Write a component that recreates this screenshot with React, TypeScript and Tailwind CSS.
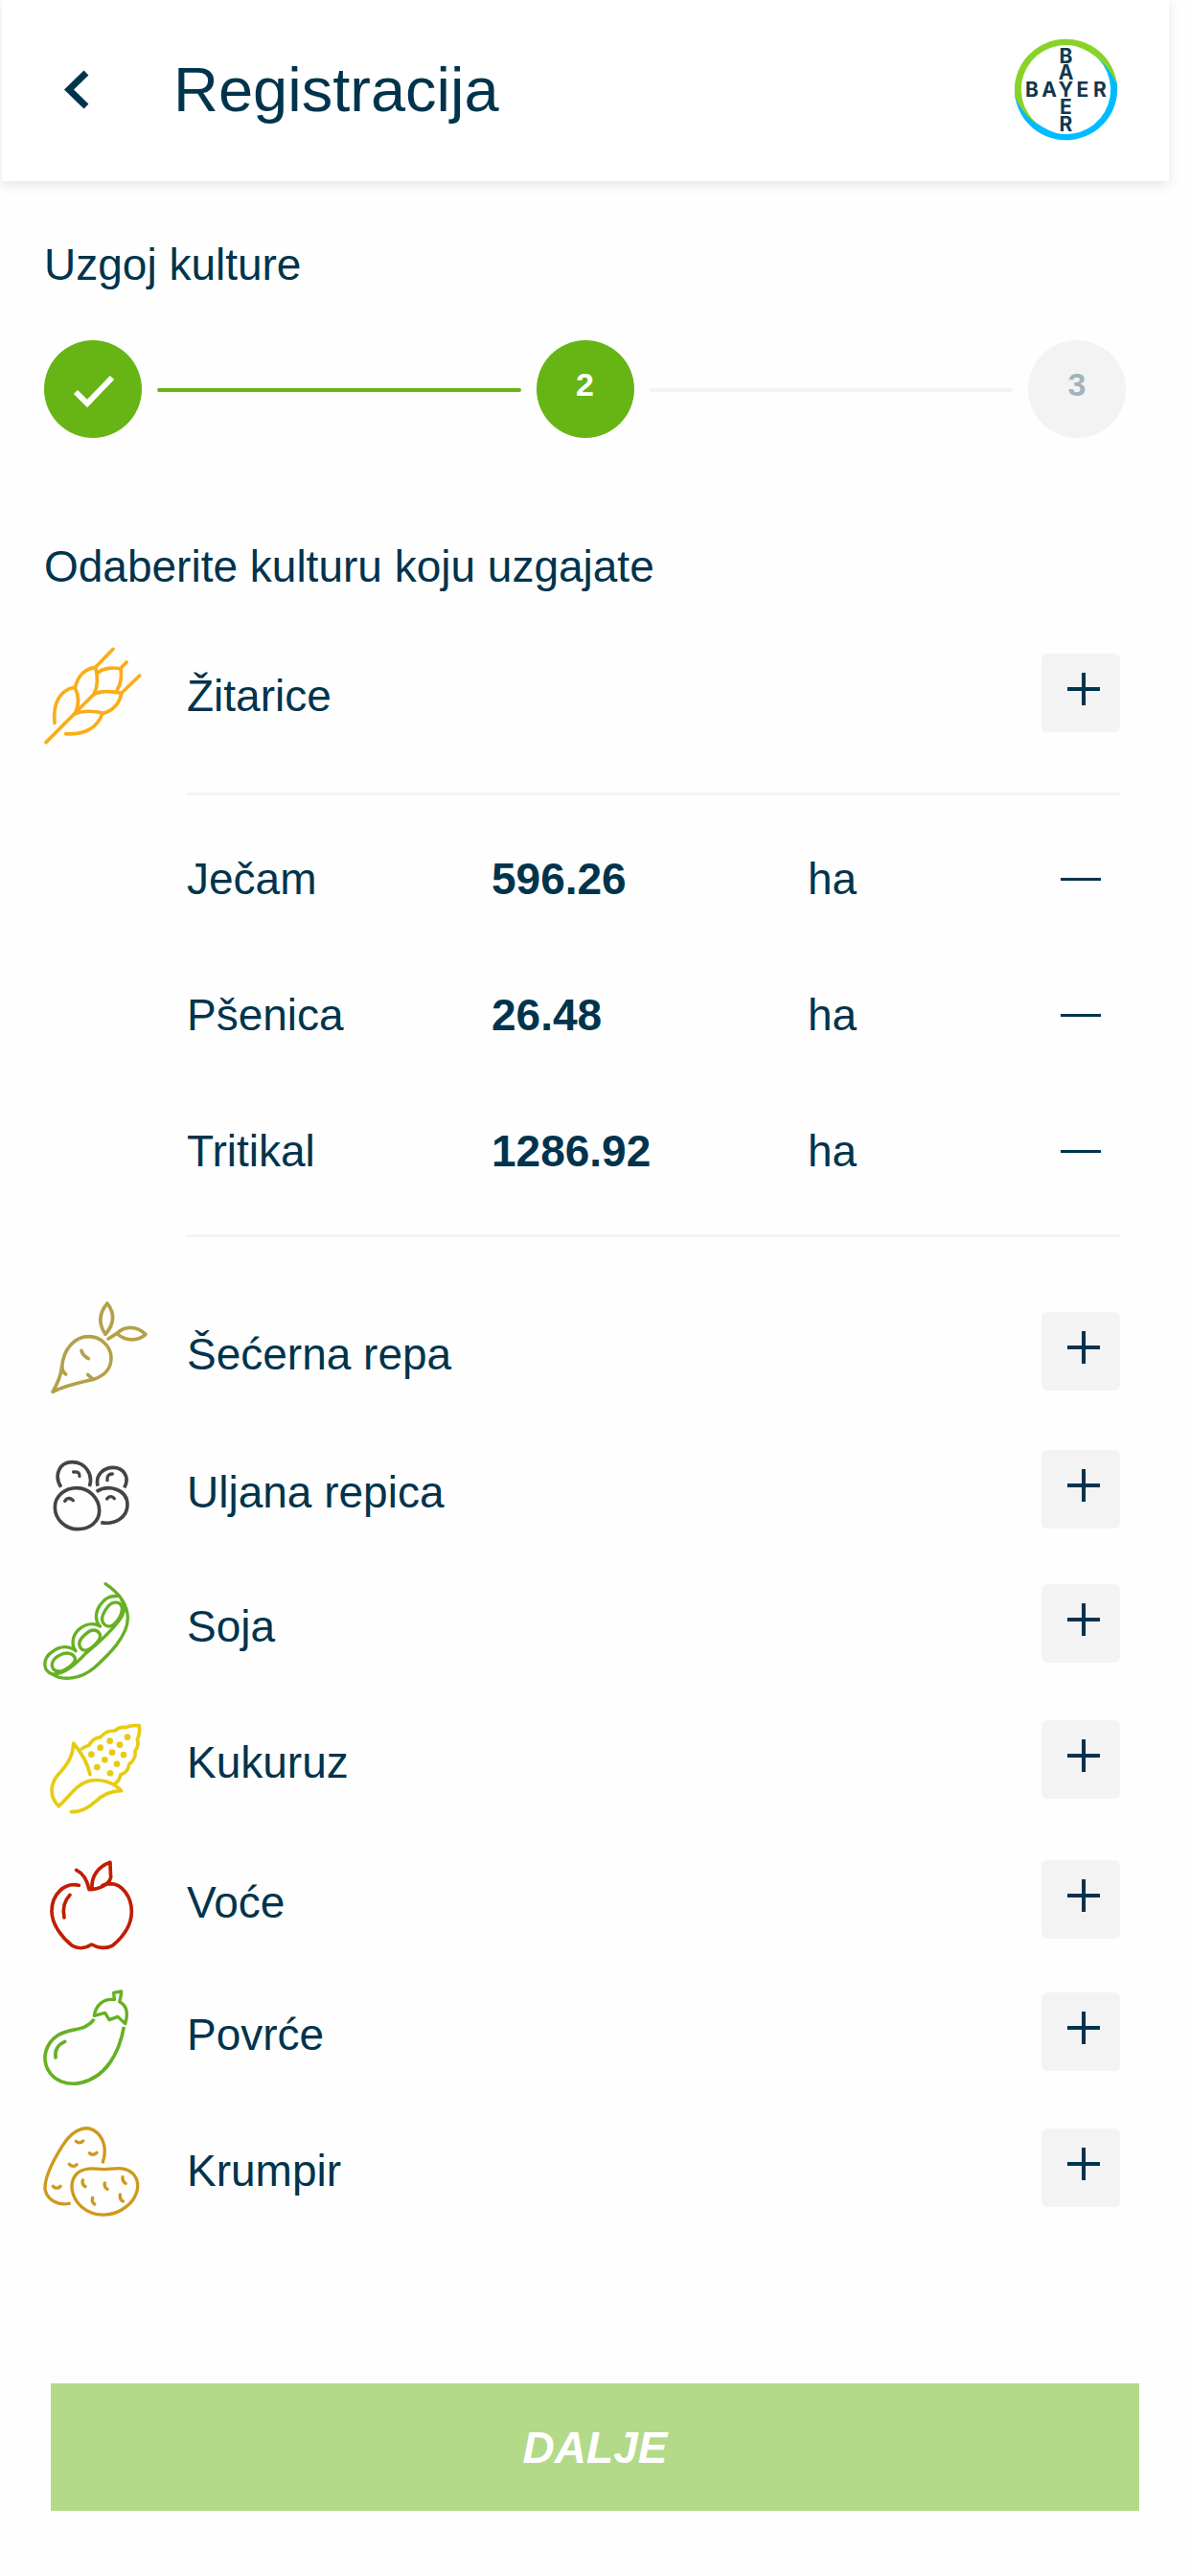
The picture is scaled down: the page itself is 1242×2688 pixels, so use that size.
import React, { useState } from 'react';

interface Culture {
  id: string;
  name: string;
  icon: React.ReactNode;
  rowClass: string;
}

interface Crop {
  name: string;
  area: string;
}

interface IconProps {
  color: string;
  viewBox: string;
  children: React.ReactNode;
}

const Icon: React.FC<IconProps> = ({ color, viewBox, children }) => (
  <svg
    className="w-28 h-28 overflow-visible"
    viewBox={viewBox}
    fill="none"
    stroke={color}
    strokeWidth="11"
    strokeLinecap="round"
    strokeLinejoin="round"
    aria-hidden="true"
  >
    {children}
  </svg>
);

const WheatIcon = () => (
  <Icon color="#fbac18" viewBox="78 83 336 336">
    <path d="M84 406 L232 257 M239 171 L294 114 M318 174 L336 155 M318 254 L377 197" />
    <path d="M111 345 C105 285 126 243 174 233 C188 262 186 292 176 313" />
    <path d="M176 233 C182 200 206 175 239 171 C247 202 246 232 234 255" />
    <path d="M246 188 C264 173 294 170 318 176 C322 202 318 224 307 241" />
    <path d="M232 257 C252 244 290 245 320 252 C314 286 294 306 261 316" />
    <path d="M172 318 C198 306 236 307 261 314 C246 360 205 384 146 379" />
  </Icon>
);

const BeetIcon = () => (
  <Icon color="#b4a04b" viewBox="48 43 336 336">
    <path d="M75 338 C94 306 101 284 104 260 C108 205 143 165 188 165 C227 165 258 197 258 232 C258 266 236 289 202 299 C170 307 120 315 75 338 Z" />
    <path d="M104 260 C105 271 109 278 116 283 M202 299 C194 294 190 289 185 284" />
    <path d="M165 209 C168 220 176 229 187 234" />
    <path d="M240 158 C220 128 217 95 246 61 C270 92 269 124 240 158 Z" />
    <path d="M249 172 L276 155 C304 130 339 132 366 158 C341 181 300 180 276 155" />
  </Icon>
);

const RapeseedIcon = () => (
  <Icon color="#444444" viewBox="48 -5 336 336">
    <path
      strokeLinecap="butt"
      d="M101 156 C78 120 95 78 136 78 C177 78 203 117 190 154 M216 153 C208 118 234 95 264 95 C299 95 317 128 299 158 M212 170 C250 147 309 162 309 212 C309 252 269 275 226 267"
    />
    <path d="M151 159 C189 159 221 192 221 230 C221 265 191 288 154 288 C116 288 82 258 82 219 C82 184 112 159 151 159 Z" />
    <path strokeWidth="10" d="M140 109 C153 107 160 112 159 122 M246 135 C244 122 250 115 262 115 M113 200 C119 190 131 188 139 198 M245 193 C251 184 262 184 268 192" />
  </Icon>
);

const SoyIcon = () => (
  <Icon color="#67b024" viewBox="48 7 336 336">
    <path strokeWidth="10" d="M240 51 C282 79 309 112 310 158 C311 216 246 277 207 312 C163 350 105 356 74 334 C112 335 145 304 178 269 C212 241 250 211 285 163 C301 142 302 116 290 101" />
    <path strokeWidth="10" d="M278 90 C252 87 239 97 223 118 C207 141 208 168 223 184 M224 184 C200 171 175 178 157 194 C135 214 133 244 147 261 M147 261 C126 243 97 246 76 262 C39 286 45 324 74 334" />
    <path strokeWidth="10" d="M238 179 C221 164 231 144 247 123 C263 103 287 106 292 125 C295 149 268 187 248 184 C244 183 241 182 238 179 Z" />
    <path strokeWidth="10" d="M166 256 C150 239 161 222 180 207 C198 190 216 194 223 209 C229 226 191 263 174 259 Z M79 320 C65 303 77 286 94 276 C115 263 137 266 145 283 C151 299 110 325 95 325 C88 325 83 323 79 320 Z" />
  </Icon>
);

const kernels = [
  [309, 96], [254, 108], [285, 120], [224, 129], [261, 144], [196, 150],
  [297, 151], [238, 167], [276, 180], [214, 190], [255, 209],
];

const CornIcon = () => (
  <Icon color="#e6cc10" viewBox="48 -2 336 336">
    <path d="M94 312 C62 281 68 240 94 211 C125 178 139 151 140 115 C162 141 184 174 192 213" />
    <path d="M94 312 C127 282 148 246 184 234 C223 224 266 236 290 264 C252 266 231 277 207 299 C183 321 161 331 133 330" />
    <path d="M167 132 C177 124 184 124 189 122 C196 107 208 98 225 96 C236 82 250 75 270 76 C281 65 292 64 303 66 C317 59 332 59 346 60 C348 78 346 91 340 104 C345 116 341 128 333 139 C336 157 326 173 314 181 C313 197 301 209 287 214 C286 226 279 235 271 241" />
    <g fill="#e6cc10" stroke="none">
      {kernels.map(([x, y]) => <circle key={`${x}-${y}`} cx={x} cy={y} r="10" />)}
    </g>
  </Icon>
);

const AppleIcon = () => (
  <Icon color="#c01e00" viewBox="48 16 336 336">
    <path d="M157 140 C112 129 72 168 72 221 C72 264 107 306 135 328 C156 341 180 336 197 325 C216 336 244 340 263 328 C294 302 322 265 322 222 C322 175 292 136 257 135 C247 135 239 136 231 140" />
    <path d="M149 92 C170 102 183 122 189 153 C221 152 251 138 257 115 C256 99 255 84 255 68 C219 81 195 110 198 150" />
    <path d="M129 170 C111 189 105 213 111 241" />
  </Icon>
);

const EggplantIcon = () => (
  <Icon color="#67b024" viewBox="48 10 336 336">
    <path strokeLinecap="butt" d="M205 139 C172 182 131 163 90 190 C52 216 41 260 60 297 C80 333 120 347 163 338 C241 321 283 246 298 163" />
    <path d="M205 128 C210 96 233 73 268 78 L266 56 L290 52 C289 63 288 74 284 84 C310 97 310 126 302 153 L279 131 L252 141 L239 119 Z" strokeWidth="10" />
    <path d="M113 209 C90 219 81 236 84 259" />
  </Icon>
);

const PotatoIcon = () => (
  <Icon color="#cf981c" viewBox="48 16 336 336">
    <path strokeLinecap="butt" strokeWidth="10" d="M131 295 C94 304 57 286 51 251 C49 209 79 157 105 116 C131 75 169 47 204 67 C235 86 246 127 231 170" />
    <path strokeWidth="10" d="M238 189 C266 188 296 178 324 200 C354 229 342 278 305 306 C263 340 204 339 166 307 C133 278 124 230 151 202 C176 181 207 187 238 189 Z" />
    <path strokeWidth="10" d="M148 101 C155 108 165 107 170 100 M190 138 C196 145 208 144 213 137 M127 173 C133 181 145 181 150 174 M76 242 C82 250 95 249 99 242 M169 223 C167 232 170 239 177 243 M238 232 C236 241 239 247 246 251 M294 213 C293 222 296 229 303 233 M286 268 C285 278 288 286 295 289 M200 278 C197 287 200 294 206 298" />
  </Icon>
);

const BayerLogo = () => {
  const ring = 'M0 60 A53.5 53.5 0 0 1 107 49 A68 68 0 0 0 64 8.2 A46.5 46.5 0 0 0 33.9 95.7 A68 68 0 0 1 0 60 Z';
  return (
    <svg className="w-[107px] h-[107px]" viewBox="0 0 107 107" role="img" aria-label="Bayer">
      <path d={ring} fill="#00bcff" transform="rotate(180 53.5 53.5)" />
      <path d={ring} fill="#89d329" />
      <g fill="#10384f" fontFamily="Inter, sans-serif" fontSize="21" fontWeight="700" textAnchor="middle">
        <text x="18 36 53.5 71 89" y="61">BAYER</text>
        <text x="53.5 53.5 53.5 53.5" y="26 43 79 97">BAER</text>
      </g>
    </svg>
  );
};

const AddButton: React.FC<{ label: string }> = ({ label }) => (
  <button type="button" aria-label={`Dodaj ${label}`} className="w-[82px] h-[82px] rounded-md bg-[#f3f3f3]">
    <svg className="w-full h-full" viewBox="0 0 82 82" stroke="#00344d" strokeWidth="4" aria-hidden="true">
      <path d="M27 37 H61 M44 20 V54" />
    </svg>
  </button>
);

const CultureRow: React.FC<{ culture: Culture }> = ({ culture }) => (
  <div className={`flex items-center ${culture.rowClass}`}>
    <div className="w-[149px] shrink-0">{culture.icon}</div>
    <span className="flex-1 pt-1.5">{culture.name}</span>
    <AddButton label={culture.name} />
  </div>
);

const cereals: Culture = { id: 'zitarice', name: 'Žitarice', icon: <WheatIcon />, rowClass: 'h-[142px]' };

const cultures: Culture[] = [
  { id: 'repa', name: 'Šećerna repa', icon: <BeetIcon />, rowClass: 'h-[142px]' },
  { id: 'repica', name: 'Uljana repica', icon: <RapeseedIcon />, rowClass: 'h-[146px]' },
  { id: 'soja', name: 'Soja', icon: <SoyIcon />, rowClass: 'h-[134px]' },
  { id: 'kukuruz', name: 'Kukuruz', icon: <CornIcon />, rowClass: 'h-[150px]' },
  { id: 'voce', name: 'Voće', icon: <AppleIcon />, rowClass: 'h-[142px]' },
  { id: 'povrce', name: 'Povrće', icon: <EggplantIcon />, rowClass: 'h-[134px]' },
  { id: 'krumpir', name: 'Krumpir', icon: <PotatoIcon />, rowClass: 'h-[150px]' },
];

const initialCrops: Crop[] = [
  { name: 'Ječam', area: '596.26' },
  { name: 'Pšenica', area: '26.48' },
  { name: 'Tritikal', area: '1286.92' },
];

export default function App() {
  const [crops, setCrops] = useState<Crop[]>(initialCrops);

  const updateArea = (name: string, area: string) => {
    setCrops(crops.map(c => (c.name === name ? { ...c, area } : c)));
  };

  const removeCrop = (name: string) => {
    setCrops(crops.filter(c => c.name !== name));
  };

  return (
    <div className="min-h-screen flex flex-col bg-[#fefefe] font-['Liberation_Sans',Arial,sans-serif] text-[46px] leading-[56px] text-[#00344d]">
      {/* Header */}
      <header className="ml-0.5 mr-[22px] h-[189px] pl-[54px] pr-[54px] pb-0.5 flex items-center bg-white shadow-[0_4px_12px_rgba(0,0,0,0.1)]">
        <button type="button" aria-label="Natrag" className="w-12 h-16 flex items-center justify-center">
          <svg className="w-8 h-12" viewBox="0 0 32 48" fill="none" stroke="#00344d" strokeWidth="7" aria-hidden="true">
            <path d="M26 6 L8 23.5 L26 41" />
          </svg>
        </button>
        <h1 className="flex-1 pl-[77px] text-[65px] leading-[72px]">Registracija</h1>
        <BayerLogo />
      </header>

      <main className="flex-1 pt-[59px] pl-[46px] pr-[73px]">
        <h2>Uzgoj kulture</h2>

        {/* Steps */}
        <ol className="mt-[51px] -mr-1.5 flex items-center gap-4 text-[34px] font-bold">
          <li aria-label="1" className="w-[102px] h-[102px] shrink-0 rounded-full bg-[#67b415]">
            <svg className="w-full h-full" viewBox="0 0 102 102" fill="none" stroke="#fff" strokeWidth="6" aria-hidden="true">
              <path d="M33 54 L45 66 L71 39" />
            </svg>
          </li>
          <li aria-hidden="true" className="flex-1 h-1 mt-0.5 rounded-full bg-[#67b415]" />
          <li aria-current="step" className="w-[102px] h-[102px] shrink-0 pb-2.5 rounded-full bg-[#67b415] text-white flex items-center justify-center">
            2
          </li>
          <li aria-hidden="true" className="flex-1 h-1 mt-0.5 rounded-full bg-[#f3f3f3]" />
          <li className="w-[102px] h-[102px] shrink-0 pb-2.5 rounded-full bg-[#f3f3f3] text-[#a3b3bd] flex items-center justify-center">
            3
          </li>
        </ol>

        <h2 className="mt-[106px] mb-[33px]">Odaberite kulturu koju uzgajate</h2>

        <CultureRow culture={cereals} />

        {/* Selected cereals */}
        <ul className="mt-[33px] mb-12 ml-[149px] py-4 border-y-[3px] border-[#f3f3f3]">
          {crops.map(crop => (
            <li key={crop.name} className="h-[142px] grid grid-cols-[318px_330px_1fr_auto] items-center">
              <label htmlFor={crop.name}>{crop.name}</label>
              <input
                id={crop.name}
                type="text"
                inputMode="decimal"
                className="w-72 font-bold bg-transparent outline-none"
                value={crop.area}
                onChange={e => updateArea(crop.name, e.target.value)}
              />
              <span>ha</span>
              <button
                type="button"
                aria-label={`Ukloni ${crop.name}`}
                className="w-[82px] h-[82px] pl-5 flex items-center"
                onClick={() => removeCrop(crop.name)}
              >
                <span className="w-[42px] h-[3px] bg-[#00344d]" />
              </button>
            </li>
          ))}
        </ul>

        {cultures.map(culture => (
          <CultureRow key={culture.id} culture={culture} />
        ))}
      </main>

      <footer className="pl-[53px] pr-[53px] pb-[68px]">
        <button type="button" className="w-full h-[133px] bg-[#b2da89] text-white font-bold italic">
          DALJE
        </button>
      </footer>
    </div>
  );
}
